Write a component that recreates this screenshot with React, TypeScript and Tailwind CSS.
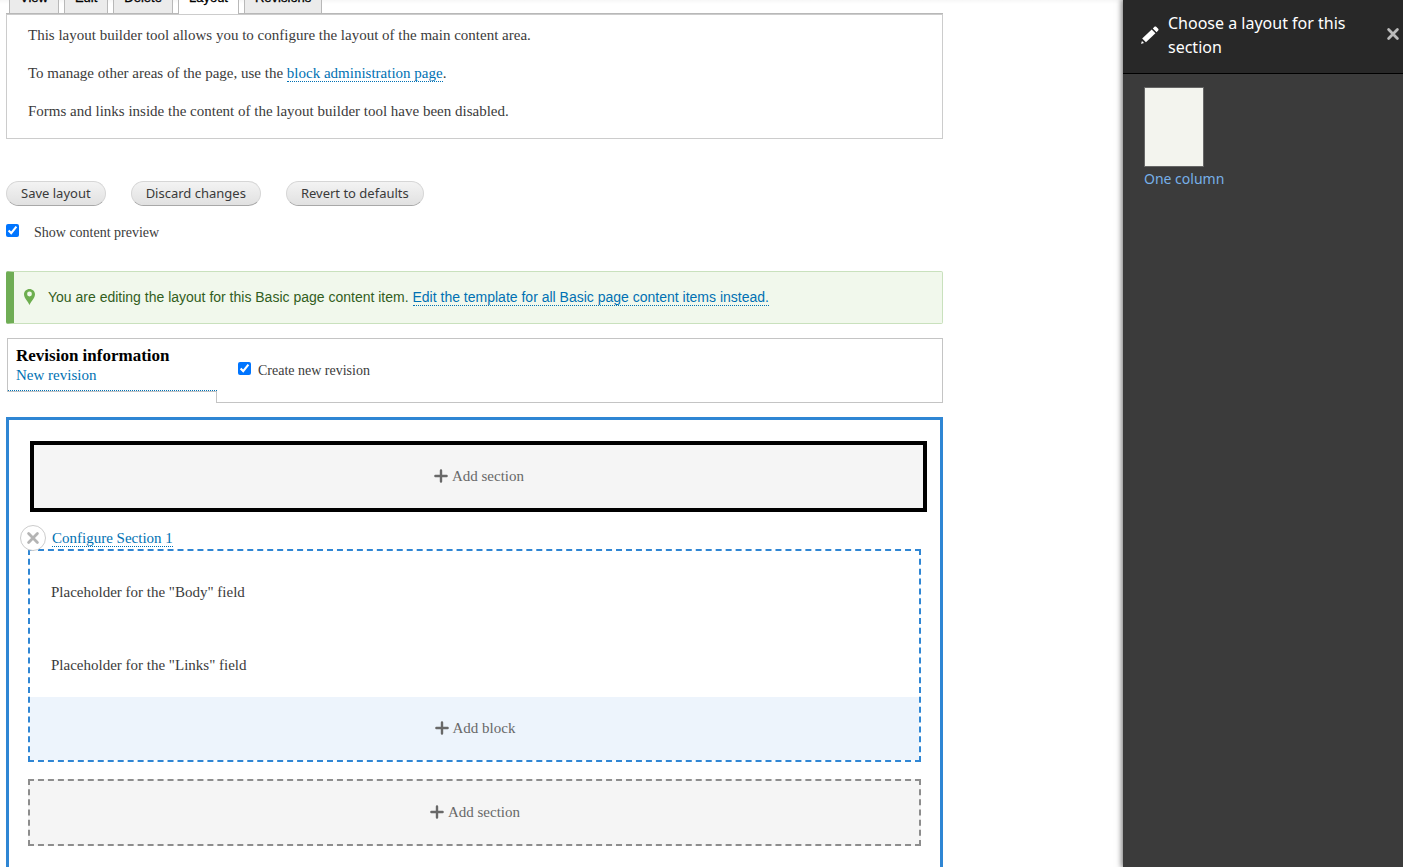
import React from "react";

const tabs = ["View", "Edit", "Delete", "Layout", "Revisions"];

const link =
  "border-b border-dotted border-[#0071b3] text-[#0071b3]";

function PlusIcon() {
  return (
    <svg viewBox="0 0 16 16" className="size-4" fill="none" stroke="currentColor" strokeWidth="2.4" strokeLinecap="round" aria-hidden="true">
      <path d="M8 2.4v11.2M2.4 8h11.2" />
    </svg>
  );
}

function ExIcon({ className }: { className: string }) {
  return (
    <svg viewBox="0 0 16 16" className={className} fill="none" stroke="currentColor" strokeWidth="2.8" strokeLinecap="round" aria-hidden="true">
      <path d="M3.6 3.6l8.8 8.8M12.4 3.6l-8.8 8.8" />
    </svg>
  );
}

function PencilIcon() {
  return (
    <svg viewBox="0 0 16 16" className="mb-1 size-5 shrink-0" fill="#fff" aria-hidden="true">
      <path d="M14.545 3.042l-1.586-1.585c-.389-.389-1.025-.389-1.414 0l-1.293 1.293 3 3 1.293-1.293c.39-.389.39-1.026 0-1.415z" />
      <path d="M9.35 3.65l3 3-7.6 7.2-3-3z" />
      <path d="M.908 14.775c-.087.262.055.397.316.312l2.001-.667-1.65-1.646-.667 2.001z" />
    </svg>
  );
}

function PinIcon() {
  return (
    <svg viewBox="0 0 11 16" className="h-4 w-[11px] shrink-0" fill="#6dae4f" fillRule="evenodd" aria-hidden="true">
      <path d="M5.5 0C2.5 0 0 2.4 0 5.3 0 9 3.6 12 5.5 16 7.4 12 11 9 11 5.3 11 2.4 8.5 0 5.5 0zm0 7.4a2.4 2.4 0 1 1 0-4.8 2.4 2.4 0 0 1 0 4.8z" />
    </svg>
  );
}

function PillButton({ children }: { children: React.ReactNode }) {
  return (
    <button
      type="button"
      className="h-[25px] rounded-full border border-[#d6d6d6] border-b-[#a8a8a8] bg-linear-to-b from-[#f3f3f3] to-[#e1e1e1] px-[14px] font-['Noto_Sans',sans-serif] text-[13px] leading-none text-[#3a3a3a]"
    >
      {children}
    </button>
  );
}

function AddLink({ children, className }: { children: React.ReactNode; className: string }) {
  return (
    <a href="#add" className={`flex items-center justify-center gap-[3px] pb-[2px] text-[15px] leading-5 text-[#686868] ${className}`}>
      <PlusIcon />
      {children}
    </a>
  );
}

function Tabs() {
  return (
    <nav aria-label="Tabs" className="flex h-[14px] items-end gap-[5px] overflow-hidden pl-[3px] shadow-[inset_0_-1px_#b8b8b8]">
      {tabs.map((tab) => (
        <a
          key={tab}
          href={`#${tab.toLowerCase()}`}
          className={
            tab === "Layout"
              ? "h-[28px] shrink-0 border-x border-[#b8b8b8] bg-white px-[10px] font-['Liberation_Sans',sans-serif] text-[13px] leading-6 text-black [-webkit-text-stroke:0.3px_black]"
              : "mb-px h-[27px] shrink-0 border-x border-[#b8b8b8] bg-[#ebebeb] px-[10px] font-['Liberation_Sans',sans-serif] text-[13px] leading-6 text-black [-webkit-text-stroke:0.3px_black]"
          }
        >
          {tab}
        </a>
      ))}
    </nav>
  );
}

function LayoutBuilder() {
  return (
    <section className="mt-[14px] flex-1 border-3 border-b-0 border-[#2f86d4] px-[19px] pt-[21px] pb-[21px]">
      <AddLink className="-mr-[6px] ml-[2px] h-[71px] border-4 border-black bg-[#f5f5f5]">Add section</AddLink>
      <div className="-ml-2 mt-[13px] flex h-[24px] items-center gap-[6px]">
        <button
          type="button"
          aria-label="Remove Section 1"
          className="relative z-10 mt-[2px] flex size-[26px] shrink-0 items-center justify-center rounded-full border border-[#ccc] bg-white text-[#b4b4b4]"
        >
          <ExIcon className="size-4" />
        </button>
        <a href="#configure" className={`mt-[2px] text-[15px] leading-4 ${link}`}>Configure Section 1</a>
      </div>
      <div className="border-2 border-dashed border-[#2f86d4]">
        <p className="px-[21px] pt-[31px] text-[15px] leading-5">Placeholder for the "Body" field</p>
        <p className="px-[21px] pt-[53px] pb-[22px] text-[15px] leading-5">Placeholder for the "Links" field</p>
        <AddLink className="h-[63px] bg-[#edf4fc]">Add block</AddLink>
      </div>
      <AddLink className="mt-[17px] h-[67px] border-2 border-dashed border-[#8d8d8d] bg-[#f5f5f5]">Add section</AddLink>
    </section>
  );
}

function Sidebar() {
  return (
    <aside className="relative z-10 w-[280px] shrink-0 bg-[#3b3b3b] font-['Noto_Sans',sans-serif] shadow-[0_0_6px_1px_rgba(0,0,0,0.6)]">
      <header className="flex h-[74px] items-center border-b border-black bg-[#282828] pl-[17px]">
        <PencilIcon />
        <h2 className="ml-2 flex-1 pb-[3px] text-base leading-6 text-white">Choose a layout for this section</h2>
        <button type="button" aria-label="Close" className="flex w-5 justify-center pb-[5px] text-[#bbb]">
          <ExIcon className="size-4" />
        </button>
      </header>
      <a href="#one-column" className="ml-[21px] mt-[13px] inline-flex flex-col text-[14px] leading-5 text-[#77b0e8]">
        <svg viewBox="0 0 60 80" className="h-20 w-[60px]" aria-hidden="true">
          <rect x="0.5" y="0.5" width="59" height="79" fill="#f3f4ee" stroke="#666" />
        </svg>
        <span className="mt-[2px]">One column</span>
      </a>
    </aside>
  );
}

export default function App() {
  return (
    <div className="relative flex min-h-screen bg-white font-['Liberation_Serif',serif] text-[#3b3b3b]">
      <main className="flex min-w-0 flex-1 flex-col bg-linear-to-b from-[#f7f7f7] to-white to-[4px] pr-[180px] pl-[6px]">
        <Tabs />
        <div className="flex flex-col gap-[18px] border border-[#ccc] px-[21px] pt-[10px] pb-[17px] text-[15px] leading-5">
          <p>This layout builder tool allows you to configure the layout of the main content area.</p>
          <p>
            To manage other areas of the page, use the{" "}
            <a href="#blocks" className={link}>block administration page</a>.
          </p>
          <p>Forms and links inside the content of the layout builder tool have been disabled.</p>
        </div>

        <div className="mt-[42px] flex gap-[25px]">
          <PillButton>Save layout</PillButton>
          <PillButton>Discard changes</PillButton>
          <PillButton>Revert to defaults</PillButton>
        </div>
        <label className="mt-[17px] flex h-5 items-center gap-[15px] self-start text-[14px] leading-5">
          <input type="checkbox" defaultChecked className="-mt-[5px] size-[13px]" />
          Show content preview
        </label>

        <div className="mt-7 flex h-[53px] items-center gap-[13px] rounded-[2px] border border-l-8 border-[#c9e1bd] border-l-[#6fad55] bg-[#f1f8ec] pb-[2px] pl-[10px] font-['Liberation_Sans',sans-serif] text-[14px] leading-4 text-[#325e1c]">
          <PinIcon />
          <p>
            You are editing the layout for this Basic page content item.{" "}
            <a href="#template" className={link}>Edit the template for all Basic page content items instead.</a>
          </p>
        </div>

        <div className="mt-[14px] ml-px flex h-[65px] items-start">
          <a href="#revision" className="relative z-10 -mr-px block h-[54px] w-[210px] shrink-0 border-t border-b border-l border-[#c4c4c4] bg-white">
            <span className="block h-[52px] border-b border-dotted border-[#0071b3] pt-[7px] pl-2 leading-5">
              <strong className="block text-[17px] leading-5 text-black">Revision information</strong>
              <span className="block text-[15px] leading-[18px] text-[#0071b3]">New revision</span>
            </span>
          </a>
          <div className="flex h-[65px] flex-1 flex-col border border-[#c4c4c4]">
            <label className="ml-[21px] flex h-[63px] items-center gap-[7px] text-[14px] leading-5">
              <input type="checkbox" defaultChecked className="-mt-[5px] size-[13px]" />
              Create new revision
            </label>
          </div>
        </div>

        <LayoutBuilder />
      </main>
      <Sidebar />
    </div>
  );
}
